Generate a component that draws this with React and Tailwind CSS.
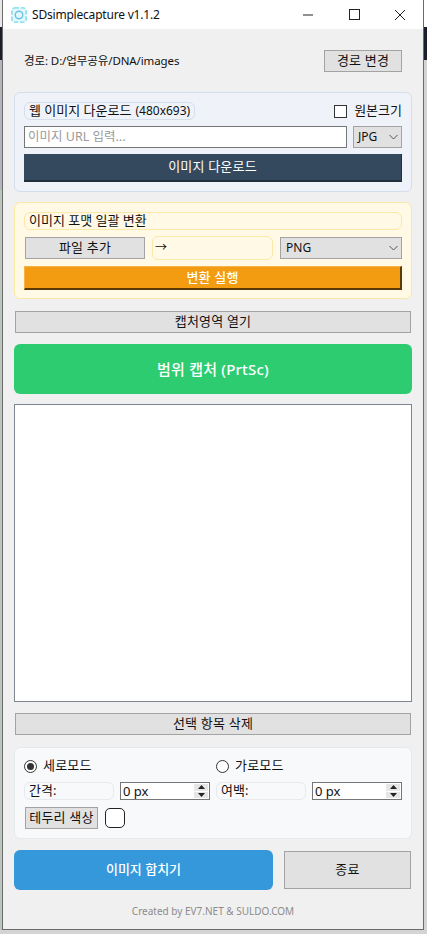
const F = '[font-family:"Noto_Sans","Noto_Sans_CJK_KR",sans-serif]';

function Btn({ className = "", children }) {
  return (
    <button className={`flex items-center justify-center bg-[#e1e1e1] border border-[#a3a3a3] text-[13px] text-[#111] tracking-[0.2px] ${className}`}>
      {children}
    </button>
  );
}

function Chevron() {
  return (
    <svg width="9" height="6" viewBox="0 0 9 6" className="shrink-0">
      <path d="M.5 1l4 4 4-4" fill="none" stroke="#555" strokeWidth="1" />
    </svg>
  );
}

function Spin({ value }) {
  return (
    <div className="w-[90px] h-[18px] border border-[#767676] bg-white flex items-center justify-between pl-[2px] pr-[1px] text-[13px] text-[#111] leading-none">
      <span>{value}</span>
      <div className="w-[14px] h-[14px] flex flex-col gap-[1px] bg-white">
        <div className="flex-1 bg-[#e6e6e6] flex items-center justify-center">
          <svg width="7" height="4" viewBox="0 0 7 4"><path d="M3.5 0L7 4H0z" fill="#222" /></svg>
        </div>
        <div className="flex-1 bg-[#e6e6e6] flex items-center justify-center">
          <svg width="7" height="4" viewBox="0 0 7 4"><path d="M0 0h7L3.5 4z" fill="#222" /></svg>
        </div>
      </div>
    </div>
  );
}

function Radio({ on, label, className = "" }) {
  return (
    <div className={`flex items-center gap-[6px] ${className}`}>
      <div className="w-[13px] h-[13px] rounded-full border border-[#333] bg-white flex items-center justify-center">
        {on && <div className="w-[7px] h-[7px] rounded-full bg-[#333]" />}
      </div>
      <span className="text-[13px] text-[#111] tracking-[0.2px]">{label}</span>
    </div>
  );
}

export default function App() {
  return (
    <div className={`w-[427px] h-[934px] bg-[#d4d4d4] overflow-hidden ${F}`}>
      <div className="flex h-[930px]">
        <div className="w-[2px] shrink-0 flex flex-col">
          <div className="h-[27px] bg-[#e8e8e8]" />
          <div className="h-[33px] bg-[#1a1f2b]" />
          <div className="h-[130px] bg-[#b4b6bb]" />
          <div className="flex-1 bg-[#bcc6bc]" />
        </div>
        <div className="w-[422px] shrink-0 border-x border-b border-[#6b6b6b] bg-[#f0f0f0] flex flex-col">
          <div className="h-[29px] bg-white flex items-center shrink-0">
            <svg width="16" height="16" viewBox="0 0 18 18" className="ml-[8px]">
              <rect x="1" y="1" width="16" height="16" rx="3" fill="#e4f7fb" stroke="#6fdcec" strokeWidth="1.5" strokeDasharray="5 2" />
              <circle cx="9" cy="9" r="4.2" fill="none" stroke="#6cc3e6" strokeWidth="1.6" />
            </svg>
            <span className="ml-[5px] text-[12px] text-[#111] tracking-[-0.2px]">SDsimplecapture v1.1.2</span>
            <div className="ml-auto flex items-center">
              <div className="w-[46px] flex justify-center">
                <svg width="12" height="12" viewBox="0 0 12 12"><path d="M1 6h10" stroke="#222" /></svg>
              </div>
              <div className="w-[46px] flex justify-center">
                <svg width="11" height="11" viewBox="0 0 11 11"><rect x=".5" y=".5" width="10" height="10" fill="none" stroke="#222" /></svg>
              </div>
              <div className="w-[46px] flex justify-center">
                <svg width="12" height="12" viewBox="0 0 12 12"><path d="M1 1l10 10M11 1L1 11" stroke="#222" /></svg>
              </div>
            </div>
          </div>

          <div className="flex-1 flex flex-col px-[11px]">
            <div className="h-[22px] mt-[21px] flex items-center justify-between pl-[10px] pr-[10px] shrink-0">
              <span className="text-[11.5px] text-[#111] tracking-[-0.1px]">경로: D:/업무공유/DNA/images</span>
              <Btn className="w-[78px] h-[22px]">경로 변경</Btn>
            </div>

            <div className="mt-[20px] h-[100px] shrink-0 rounded-[6px] border border-[#d5deec] bg-[#eff3f9] px-[9px] pt-[9px]">
              <div className="h-[18px] flex items-center justify-between">
                <span className="h-[18px] px-[4px] rounded-[6px] border border-[#d5deec] flex items-center gap-[4px] text-[13px] text-[#111]">
                  웹 이미지 다운로드 <span className="text-[12px]">(480x693)</span>
                </span>
                <div className="flex items-center gap-[7px]">
                  <div className="w-[13px] h-[13px] border border-[#333] bg-white" />
                  <span className="text-[13px] text-[#111]">원본크기</span>
                </div>
              </div>
              <div className="mt-[6px] h-[22px] flex items-center justify-between">
                <div className="w-[323px] h-[22px] border border-[#767676] bg-white flex items-center px-[3px] text-[12.5px] text-[#9a9a9a]">이미지 URL 입력...</div>
                <div className="w-[49px] h-[22px] border border-[#a3a3a3] bg-[#e1e1e1] flex items-center justify-between pl-[4px] pr-[3px] text-[12px] text-[#111]">
                  JPG <Chevron />
                </div>
              </div>
              <button className="mt-[6px] w-full h-[28px] bg-[#34495e] border-b-2 border-r border-[#222f3d] text-[13px] text-white tracking-[0.2px]">이미지 다운로드</button>
            </div>

            <div className="mt-[10px] h-[97px] shrink-0 rounded-[6px] border border-[#fbe8a6] bg-[#fff9e6] px-[9px] pt-[9px]">
              <div className="h-[18px] rounded-[6px] border border-[#fbe8a6] px-[4px] flex items-center text-[13px] text-[#111]">이미지 포맷 일괄 변환</div>
              <div className="mt-[6px] h-[24px] flex items-center justify-between pl-[1px]">
                <Btn className="w-[120px] h-[22px]">파일 추가</Btn>
                <div className="w-[121px] h-[24px] rounded-[6px] border border-[#fbe8a6] flex items-center pl-[2px] text-[12px] text-[#111]">→</div>
                <div className="w-[122px] h-[22px] border border-[#a3a3a3] bg-[#e1e1e1] flex items-center justify-between pl-[5px] pr-[3px] text-[12px] text-[#111]">
                  PNG <Chevron />
                </div>
              </div>
              <button className="mt-[6px] w-full h-[24px] bg-[#f39c12] border-t border-l border-[#f7b34a] border-b-2 border-b-[#5a3a06] border-r-2 border-r-[#5a3a06] text-[13px] font-medium text-white tracking-[0.2px]">변환 실행</button>
            </div>

            <Btn className="mt-[12px] mx-[1px] h-[22px] shrink-0">캡처영역 열기</Btn>

            <button className="mt-[11px] h-[50px] shrink-0 rounded-[6px] bg-[#2ecc71] text-[15px] font-medium text-white tracking-[0.2px]">범위 캡처 (PrtSc)</button>

            <div className="mt-[10px] h-[298px] shrink-0 border border-[#7e8791] bg-white" />

            <Btn className="mt-[11px] mx-[1px] h-[22px] shrink-0">선택 항목 삭제</Btn>

            <div className="mt-[12px] h-[92px] shrink-0 rounded-[6px] border border-[#e6e9ee] bg-[#f7f9fb] px-[9px] pt-[9px]">
              <div className="h-[18px] flex items-center">
                <Radio on label="세로모드" className="w-[192px]" />
                <Radio label="가로모드" />
              </div>
              <div className="mt-[7px] h-[18px] flex items-center">
                <div className="w-[90px] h-[18px] rounded-[6px] border border-[#e6e9ee] px-[4px] flex items-center text-[13px] text-[#111]">간격:</div>
                <div className="ml-[6px]"><Spin value="0 px" /></div>
                <div className="ml-[6px] w-[90px] h-[18px] rounded-[6px] border border-[#e6e9ee] px-[4px] flex items-center text-[13px] text-[#111]">여백:</div>
                <div className="ml-[6px]"><Spin value="0 px" /></div>
              </div>
              <div className="mt-[7px] flex items-center gap-[7px] pl-[1px]">
                <Btn className="w-[73px] h-[22px]">테두리 색상</Btn>
                <div className="w-[20px] h-[20px] rounded-[5px] border border-[#222] bg-white" />
              </div>
            </div>

            <div className="mt-[11px] h-[40px] shrink-0 flex justify-between items-center pr-[1px]">
              <button className="w-[259px] h-[40px] rounded-[6px] bg-[#3498db] text-[13px] font-medium text-white">이미지 합치기</button>
              <Btn className="w-[127px] h-[38px]">종료</Btn>
            </div>

            <div className="mt-[14px] text-center text-[10px] text-[#8c8c8c]">Created by EV7.NET &amp; SULDO.COM</div>
          </div>
        </div>
        <div className="flex-1 flex flex-col">
          <div className="h-[27px] bg-white" />
          <div className="h-[33px] bg-[#1a1f2b]" />
          <div className="flex-1 bg-[#d4d4d4]" />
        </div>
      </div>
    </div>
  );
}
